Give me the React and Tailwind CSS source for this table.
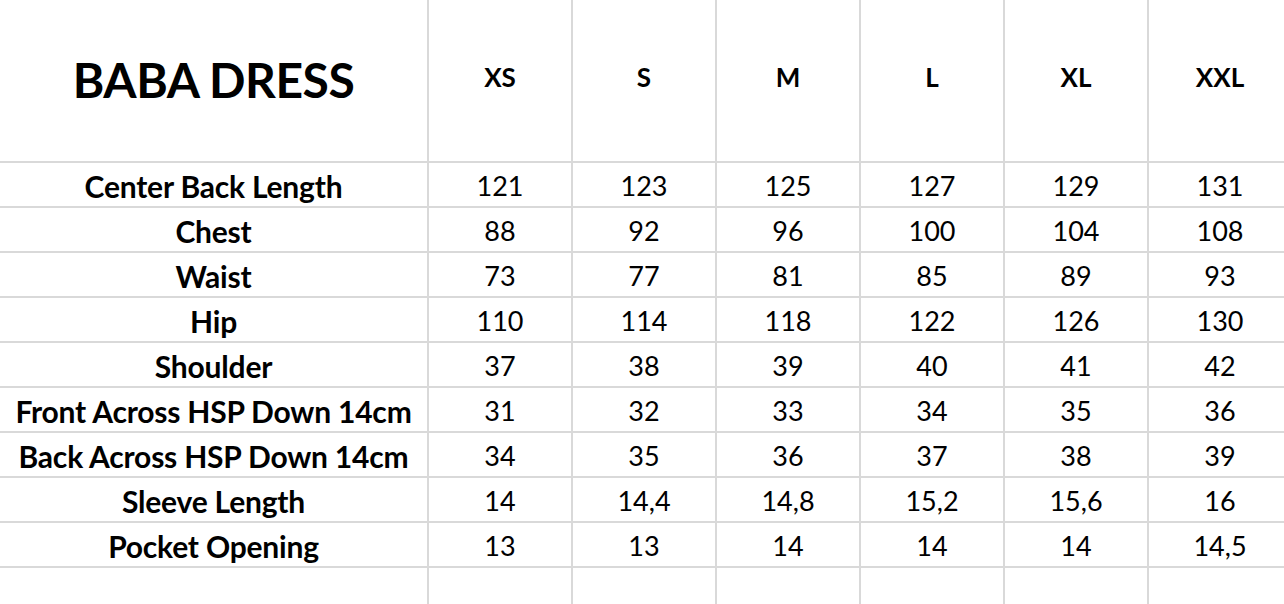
import React from 'react'

const sizes = ["XS", "S", "M", "L", "XL", "XXL"]

const rows = [
  ["Center Back Length", "121", "123", "125", "127", "129", "131"],
  ["Chest", "88", "92", "96", "100", "104", "108"],
  ["Waist", "73", "77", "81", "85", "89", "93"],
  ["Hip", "110", "114", "118", "122", "126", "130"],
  ["Shoulder", "37", "38", "39", "40", "41", "42"],
  ["Front Across HSP Down 14cm", "31", "32", "33", "34", "35", "36"],
  ["Back Across HSP Down 14cm", "34", "35", "36", "37", "38", "39"],
  ["Sleeve Length", "14", "14,4", "14,8", "15,2", "15,6", "16"],
  ["Pocket Opening", "13", "13", "14", "14", "14", "14,5"],
  ["", "", "", "", "", "", ""],
]

const cell = "flex items-center justify-center border-r-2 border-b-2 border-[#d9d9d9]"

const App = () => {
  return (
    <div className="w-[1284px] h-[604px] overflow-hidden bg-white text-black" style={{ fontFamily: "Lato, 'Liberation Sans', sans-serif" }}>
      <div className="grid grid-cols-[429px_144px_144px_144px_144px_144px_144px] w-[1293px]">
        <div className={cell + " h-[163px] pb-[2px]"}>
          <h1 className="text-[48px] font-bold tracking-[-0.5px]">BABA DRESS</h1>
        </div>
        {sizes.map((s) => (
          <div key={s} className={cell + " h-[163px] pb-[7px]"}>
            <span className="text-[26px] font-bold">{s}</span>
          </div>
        ))}

        {rows.map((r, i) => (
          r.map((v, j) => (
            <div key={i + "-" + j} className={cell + " h-[45px] pt-[3px] " + (j === 0 ? "font-bold text-[30px] tracking-[-0.2px]" : "text-[27px]")}>
              {v}
            </div>
          ))
        ))}
      </div>
    </div>
  )
}

export default App
